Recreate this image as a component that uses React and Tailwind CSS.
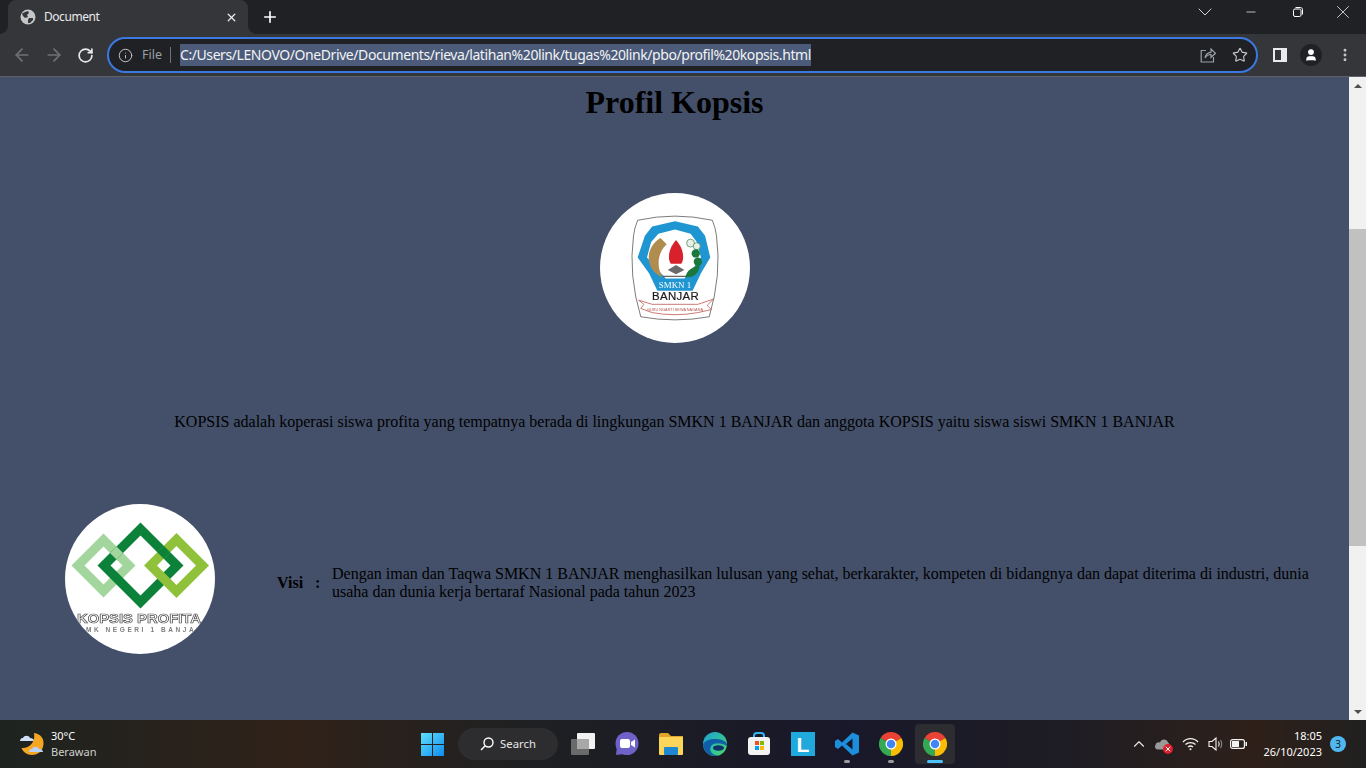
import React from "react";
import { ArrowLeft, ArrowRight, RotateCw, Info, Star, X, Plus, ChevronDown, ChevronUp, Minus, EllipsisVertical, User } from "lucide-react";

const UI = "font-['Noto_Sans',sans-serif]";

function Globe() {
  return (
    <svg width="16" height="16" viewBox="0 0 16 16">
      <circle cx="8" cy="8" r="7.5" fill="#c4c7c5" />
      <path d="M2 4.5 L5 3 L8 2 L9 4 L7 6 L8 8 L5 9 L3 7 Z" fill="#35363a" />
      <path d="M9 9 L13 9 L13 11 L10 14 L8 14 L8 11 Z" fill="#35363a" />
    </svg>
  );
}

function Share() {
  return (
    <svg width="16" height="16" viewBox="0 0 16 16" fill="none" stroke="#9aa0a6" strokeWidth="1.2">
      <path d="M6 3.5H1.2V15H13.5V10" />
      <path d="M5 11C5.5 7.5 8 5.5 11 5.3V2L15.5 6.3 11 10.3V7.5C8.5 7.5 6.5 8.8 5 11Z" />
    </svg>
  );
}

function SidePanel() {
  return (
    <svg width="14" height="14" viewBox="0 0 14 14">
      <path fillRule="evenodd" d="M0 0H14V14H0ZM2 2V12H8V2Z" fill="#e8eaed" />
    </svg>
  );
}

function Restore() {
  return (
    <svg width="10" height="10" viewBox="0 0 10 10" fill="none" stroke="#fff" strokeWidth="1">
      <rect x="0.5" y="2" width="7.5" height="7.5" rx="1.5" />
      <path d="M2.5 0.5H7.5C8.6 0.5 9.5 1.4 9.5 2.5V7.5" />
    </svg>
  );
}

function SmkLogo() {
  return (
    <svg width="94" height="110" viewBox="0 0 90 106" className="blur-[0.35px]">
      <path d="M9 7 Q45 -1 81 7 Q84 14 85 22 Q90 60 78 100 Q45 106 12 100 Q0 60 5 22 Q6 14 9 7Z" fill="#fff" stroke="#4a4a4a" strokeWidth="0.7" />
      <path d="M45 8 L67 13 L74 22 L79 43 L70 58 L62 75 L28 75 L20 58 L9 43 L16 22 L23 13 Z" fill="#1f95d2" />
      <path d="M45 16 L60 20 L66 28 L70 43 L62 54 L54 63 L36 63 L28 54 L18 43 L22 28 L29 20 Z" fill="#fff" />
      <path d="M31 24 C16 33 15 54 33 62 C27 52 28 38 37 30Z" fill="#b08d4f" />
      <path d="M46 26 C38 35 38 45 41 49 L51 49 C54 45 54 35 46 26Z" fill="#d8212a" />
      <path d="M38 55 L46 50 L54 55 L46 59Z" fill="#6a6a6a" />
      <path d="M33 61 H59" stroke="#444" strokeWidth="1" />
      <circle cx="60" cy="29" r="3.8" fill="#e9efe6" stroke="#3b8a55" strokeWidth="0.7" />
      <circle cx="66" cy="32" r="3.4" fill="#e9efe6" stroke="#3b8a55" strokeWidth="0.7" />
      <circle cx="65" cy="39" r="4" fill="#19783a" />
      <circle cx="67" cy="47" r="4" fill="#19783a" />
      <path d="M55 62 C56 55 62 52 69 50 C68 58 64 62 55 62Z" fill="#19783a" />
      <text x="45" y="72.5" textAnchor="middle" fontSize="8.6" fill="#fff" fontFamily="Liberation Serif">SMKN 1</text>
      <text x="45.5" y="84" textAnchor="middle" fontSize="11" fontWeight="500" stroke="#1b1b1b" strokeWidth="0.2" fill="#1b1b1b" fontFamily="Liberation Sans" letterSpacing="0.3">BANJAR</text>
      <path d="M10 84 L23 88 L67 88 L82 83 L76 89 L80 93 L67 96 Q45 100 23 96 L12 92 L15 88Z" fill="#fff" stroke="#c0605a" strokeWidth="0.8" />
      <text x="45" y="94" textAnchor="middle" fontSize="3.7" fill="#b5564f" fontFamily="Liberation Sans">GURU NGARTI SEWA NAGARA</text>
    </svg>
  );
}

function KopsisLogo() {
  return (
    <svg width="150" height="150" viewBox="0 0 150 150" className="blur-[0.25px]">
      <path fillRule="evenodd" d="M38.5 29.5 L70.5 61.5 L38.5 93.5 L6.5 61.5Z M38.5 42.5 L19.5 61.5 L38.5 80.5 L57.5 61.5Z" fill="#a3d69c" />
      <path fillRule="evenodd" d="M75.5 18.5 L118.5 61.5 L75.5 104.5 L32.5 61.5Z M75.5 31.5 L45.5 61.5 L75.5 91.5 L105.5 61.5Z" fill="#0b8139" />
      <path fillRule="evenodd" d="M111.5 29 L144 61.5 L111.5 94 L79 61.5Z M111.5 42 L92 61.5 L111.5 81 L131 61.5Z" fill="#8fc23a" />
      <path d="M92.25 48.25 L98.75 41.75 L105.25 48.25 L98.75 54.75Z" fill="#0b8139" />
      <path d="M45 49 L51.5 42.5 L58 49 L51.5 55.5Z" fill="#a3d69c" />
      <text x="12" y="119" textLength="124" lengthAdjust="spacingAndGlyphs" fontSize="13" fontWeight="700" fill="#fff" stroke="#4f4f4f" strokeWidth="0.7" fontFamily="Liberation Sans">KOPSIS PROFITA</text>
      <text x="14" y="127.5" textLength="122" lengthAdjust="spacing" fontSize="6.5" fontWeight="700" fill="#7d7d7d" fontFamily="Liberation Sans">SMK NEGERI 1 BANJAR</text>
    </svg>
  );
}

function Chrome({ size = 24 }) {
  return (
    <svg width={size} height={size} viewBox="0 0 48 48">
      <path d="M24 24 L44.8 12 A24 24 0 0 0 3.2 12Z" fill="#ea4335" />
      <path d="M24 24 L3.2 12 A24 24 0 0 0 24 48Z" fill="#34a853" />
      <path d="M24 24 L24 48 A24 24 0 0 0 44.8 12Z" fill="#fbbc04" />
      <circle cx="24" cy="24" r="11" fill="#fff" />
      <circle cx="24" cy="24" r="8.5" fill="#4285f4" />
    </svg>
  );
}

function Slot({ children, dot }) {
  return (
    <div className="relative flex h-[24px] w-[24px] items-center justify-center">
      {children}
      {dot && <span className="absolute left-[9px] top-[28px] h-[3px] w-[6px] rounded-full bg-[#9a9a9f]" />}
    </div>
  );
}

function Taskbar() {
  return (
    <footer className={`flex h-[48px] shrink-0 items-center bg-[linear-gradient(90deg,#1e2320_0%,#302219_22%,#1f2022_38%,#18182a_62%,#1e1d24_78%,#2e2019_92%,#20201f_100%)] ${UI}`}>
      <div className="ml-[19px] flex w-[402px] items-center gap-[6px]">
        <svg width="26" height="26" viewBox="0 0 26 26">
          <path d="M15 2 C22 3 25 8 24.5 13 C24 20 19 24 13 24 C8 24 4 21 2.5 17 C9 18 17 12 15 2Z" fill="#f5a623" />
          <path d="M1 10 C1 7.5 3 7 4 7 C5 4 10 4 11 7 C13 7 15 8 15 10 Z" fill="#cfe0f7" />
          <path d="M10 21 C10 18.5 12 18 13 18 C14 15 19 15 20 18 C22 18 24 19 24 21 Z" fill="#b9d2f5" />
        </svg>
        <div className="flex flex-col text-[11px] leading-[16px]">
          <span className="text-white">30°C</span>
          <span className="text-[#cfcfcf]">Berawan</span>
        </div>
      </div>

      <svg width="23" height="23" viewBox="0 0 23 23">
        <defs>
          <linearGradient id="win" x1="0" y1="0" x2="1" y2="1">
            <stop offset="0" stopColor="#5fe0fb" />
            <stop offset="1" stopColor="#0f8cf0" />
          </linearGradient>
        </defs>
        <path d="M0 0H11V11H0ZM12 0H23V11H12ZM0 12H11V23H0ZM12 12H23V23H12Z" fill="url(#win)" />
      </svg>

      <div className="ml-[14px] flex h-[32px] w-[100px] items-center justify-center gap-[6px] rounded-full bg-[#2d2d2f] text-[11.3px] text-[#e6e6e6]">
        <svg width="14" height="14" viewBox="0 0 14 14" fill="none" stroke="#fff" strokeWidth="1.4">
          <circle cx="8.5" cy="5.5" r="4.5" />
          <path d="M5.2 8.8 L1 13" />
        </svg>
        Search
      </div>

      <div className="ml-[13px] flex items-center gap-[20px]">
        <Slot>
          <svg width="24" height="22" viewBox="0 0 24 22">
            <rect x="0" y="6" width="18" height="16" rx="1" fill="#6a6a6a" />
            <rect x="6" y="0" width="18" height="16" rx="1" fill="#f2f2f2" />
            <rect x="6" y="6" width="12" height="10" fill="#a8a8a8" />
          </svg>
        </Slot>
        <Slot>
          <svg width="24" height="24" viewBox="0 0 24 24">
            <circle cx="12" cy="11.5" r="11.5" fill="#6e62c8" />
            <path d="M1 23 L2 14 L9 22Z" fill="#6e62c8" />
            <rect x="5" y="7" width="10" height="9" rx="2" fill="#fff" />
            <path d="M16 10 L20 7.5 V15.5 L16 13Z" fill="#fff" />
          </svg>
        </Slot>
        <Slot>
          <svg width="24" height="22" viewBox="0 0 24 22">
            <path d="M0 2 Q0 0 2 0 H9 L12 3 H24 V8 H0Z" fill="#e0a526" />
            <rect x="0" y="4" width="24" height="18" rx="1" fill="#fcd65b" />
            <rect x="5" y="14" width="14" height="8" rx="1" fill="#1f86d0" />
          </svg>
        </Slot>
        <Slot>
          <svg width="24" height="24" viewBox="0 0 24 24">
            <defs>
              <linearGradient id="edge" x1="0" y1="0" x2="1" y2="1">
                <stop offset="0" stopColor="#1f9fd8" />
                <stop offset="0.5" stopColor="#2fbfa0" />
                <stop offset="1" stopColor="#4fd66a" />
              </linearGradient>
            </defs>
            <circle cx="12" cy="12" r="12" fill="url(#edge)" />
            <path d="M0 12 A12 12 0 0 0 16 23.3 C9 24 5 18 8.5 13.5 C11 10.5 18.5 10.5 23.8 14 C24 13 24 12.5 24 12 C22 8 17 7 12 7 C6 7 2 9 0 12Z" fill="#0f5fa8" />
            <ellipse cx="15.5" cy="16" rx="5.5" ry="2.7" fill="#12336a" />
          </svg>
        </Slot>
        <Slot>
          <svg width="24" height="24" viewBox="0 0 24 24">
            <path d="M7 7 V4 Q7 1 10 1 H14 Q17 1 17 4 V7" fill="none" stroke="#31b6f0" strokeWidth="2" />
            <rect x="1" y="5" width="22" height="18" rx="3" fill="#f3f3f3" />
            <rect x="8" y="9" width="4" height="4" fill="#f25022" />
            <rect x="13" y="9" width="4" height="4" fill="#7fba00" />
            <rect x="8" y="14" width="4" height="4" fill="#00a4ef" />
            <rect x="13" y="14" width="4" height="4" fill="#ffb900" />
          </svg>
        </Slot>
        <Slot>
          <div className="flex h-[24px] w-[24px] items-center justify-center bg-[#1fa9dc] font-['Liberation_Sans',sans-serif] text-[21px] font-bold leading-none text-white">L</div>
        </Slot>
        <Slot dot>
          <svg width="24" height="24" viewBox="0 0 24 24">
            <path d="M17.5 0.5 L24 3.5 V20.5 L17.5 23.5 L7 13.5 L3 17 L0 15 V9 L3 7 L7 10.5Z M17.5 6.5 L11 12 L17.5 17.5Z" fill="#1b8fdc" fillRule="evenodd" />
          </svg>
        </Slot>
        <Slot dot>
          <Chrome />
        </Slot>
      </div>

      <div className="relative ml-[12px] flex h-[40px] w-[40px] items-center justify-center rounded-[4px] bg-[#2c2c31]">
        <Chrome />
        <span className="absolute bottom-[1px] left-[12px] h-[3px] w-[16px] rounded-full bg-[#4cc2ff]" />
      </div>

      <div className="ml-auto flex items-center text-white">
        <ChevronUp size={18} strokeWidth={1.5} color="#e8e8e8" className="mr-[6px]" />
        <div className="relative mr-[11px] h-[14px] w-[17px]">
          <svg width="17" height="14" viewBox="0 0 17 14">
            <path d="M4 12.5 C1 12.5 0.5 9.5 1.5 8 C2 5 5 5 6 5.5 C7 1.5 13 1.5 14 5.5 C16 6.5 16.5 12.5 13 12.5Z" fill="#9a9a9a" />
          </svg>
          <span className="absolute bottom-[-3px] right-[-2px] flex h-[10px] w-[10px] items-center justify-center rounded-full bg-[#d9202c]">
            <X size={8} strokeWidth={3} color="#fff" />
          </span>
        </div>
        <svg width="17" height="14" viewBox="0 0 17 14" fill="none" stroke="#f2f2f2" strokeWidth="1.3" className="mr-[9px]">
          <path d="M1 5 C5 0.5 12 0.5 16 5" />
          <path d="M3.5 7.5 C6 5 11 5 13.5 7.5" />
          <path d="M6 10 C7.3 9 9.7 9 11 10" />
          <circle cx="8.5" cy="12.3" r="1" fill="#f2f2f2" stroke="none" />
        </svg>
        <svg width="16" height="14" viewBox="0 0 16 14" fill="none" stroke="#f2f2f2" strokeWidth="1.1" className="mr-[6px]">
          <path d="M1 4.5 H4 L8 1 V13 L4 9.5 H1Z" />
          <path d="M10.5 4.5 Q12 7 10.5 9.5" />
          <path d="M12.5 3 Q15 7 12.5 11" stroke="#8a8a8a" />
        </svg>
        <svg width="17" height="10" viewBox="0 0 17 10" className="mr-[16px]">
          <rect x="0.6" y="0.6" width="13.8" height="8.8" rx="2" fill="none" stroke="#f2f2f2" strokeWidth="1.2" />
          <rect x="2" y="2" width="7" height="6" fill="#f2f2f2" />
          <rect x="15.5" y="3" width="1.5" height="4" fill="#f2f2f2" />
        </svg>
        <div className="mr-[8px] flex flex-col items-end text-[11px] leading-[16px] text-white">
          <span>18:05</span>
          <span>26/10/2023</span>
        </div>
        <div className="mr-[20px] flex h-[16px] w-[16px] items-center justify-center rounded-full bg-[#4fb8f0] text-[10px] text-[#14212b]">3</div>
      </div>
    </footer>
  );
}

export default function App() {
  return (
    <div className="flex h-[768px] w-[1366px] flex-col overflow-hidden bg-[#44506a]">
      <div className={`flex h-[34px] shrink-0 items-end bg-[#202124] ${UI}`}>
        <div className="relative ml-[8px] flex h-[34px] w-[240px] items-center rounded-t-[8px] bg-[#35363a] pl-[12px] pr-[10px]">
          <span className="absolute bottom-0 left-[-8px] h-[8px] w-[8px] bg-[radial-gradient(circle_at_0_0,#202124_7.5px,#35363a_8px)]" />
          <span className="absolute bottom-0 right-[-8px] h-[8px] w-[8px] bg-[radial-gradient(circle_at_100%_0,#202124_7.5px,#35363a_8px)]" />
          <Globe />
          <span className="ml-[8px] flex-1 text-[12px] tracking-[-0.45px] text-[#e8eaed]">Document</span>
          <X size={13} strokeWidth={2.4} color="#e8eaed" />
        </div>
        <Plus size={18} strokeWidth={2.2} color="#ffffff" className="mb-[8px] ml-[13px]" />
        <div className="ml-auto mb-[10px] flex items-center text-white">
          <ChevronDown size={24} strokeWidth={0.9} color="#e8eaed" className="mr-[27px]" />
          <Minus size={14} strokeWidth={1.2} className="mr-[35px]" />
          <Restore />
          <X size={22} strokeWidth={0.8} className="ml-[29px] mr-[12px]" />
        </div>
      </div>

      <div className={`flex h-[42px] shrink-0 items-center bg-[#35363a] ${UI}`}>
        <ArrowLeft size={20} strokeWidth={2} color="#6f7276" className="ml-[12px]" />
        <ArrowRight size={20} strokeWidth={2} color="#6f7276" className="ml-[12px]" />
        <RotateCw size={17} strokeWidth={2.4} color="#e8eaed" className="ml-[13px]" />
        <div className="ml-[13px] flex h-[36px] w-[1151px] items-center rounded-full border-2 border-[#3b78e0] bg-[#202124] pl-[9px] pr-[8px]">
          <Info size={15} strokeWidth={1.6} color="#bdc1c6" />
          <span className="ml-[9px] text-[12.5px] text-[#9aa0a6]">File</span>
          <span className="ml-[8px] h-[16px] w-px bg-[#6f7276]" />
          <span className="ml-[9px] whitespace-nowrap bg-[#4c5b79] text-[14px] leading-[22px] tracking-[-0.42px] text-[#f1f3f4]">C:/Users/LENOVO/OneDrive/Documents/rieva/latihan%20link/tugas%20link/pbo/profil%20kopsis.html</span>
          <span className="ml-auto"><Share /></span>
          <Star size={16} strokeWidth={1.7} color="#c4c7c5" className="ml-[16px]" />
        </div>
        <span className="ml-[15px]"><SidePanel /></span>
        <div className="ml-[13px] flex h-[22px] w-[22px] items-center justify-center rounded-full bg-[#202124]">
          <User size={14} fill="#fff" color="#fff" />
        </div>
        <EllipsisVertical size={16} strokeWidth={2.4} color="#c4c7c5" className="ml-[15px]" />
      </div>
      <div className="h-px shrink-0 bg-[#5f6368]" />

      <div className="flex min-h-0 flex-1">
        <main className="flex-1 overflow-hidden bg-[#44506a] pt-[7px] font-['Liberation_Serif',serif] text-black">
          <h1 className="text-center text-[32px] font-bold leading-[37px]">Profil Kopsis</h1>
          <div className="mt-[72px] flex justify-center">
            <div className="flex h-[150px] w-[150px] items-center justify-center rounded-full bg-white">
              <SmkLogo />
            </div>
          </div>
          <p className="mt-[70px] text-center text-[16px] leading-[18px]">KOPSIS adalah koperasi siswa profita yang tempatnya berada di lingkungan SMKN 1 BANJAR dan anggota KOPSIS yaitu siswa siswi SMKN 1 BANJAR</p>
          <div className="ml-[65px] mt-[73px] flex items-center">
            <div className="h-[150px] w-[150px] shrink-0 overflow-hidden rounded-full bg-white">
              <KopsisLogo />
            </div>
            <b className="ml-[62px] mt-[7px] w-[38px] text-[16px] leading-[18px]">Visi</b>
            <b className="mt-[7px] w-[17px] text-[16px] leading-[18px]">:</b>
            <p className="mt-[7px] w-[990px] text-[16px] leading-[18px]">Dengan iman dan Taqwa SMKN 1 BANJAR menghasilkan lulusan yang sehat, berkarakter, kompeten di bidangnya dan dapat diterima di industri, dunia usaha dan dunia kerja bertaraf Nasional pada tahun 2023</p>
          </div>
        </main>
        <div className="flex w-[17px] shrink-0 flex-col bg-[#f1f1f1]">
          <div className="flex h-[17px] items-center justify-center">
            <div className="h-0 w-0 border-x-[4px] border-b-[4px] border-x-transparent border-b-[#505050]" />
          </div>
          <div className="mt-[135px] h-[317px] bg-[#c1c1c1]" />
          <div className="mt-auto flex h-[17px] items-center justify-center">
            <div className="h-0 w-0 border-x-[4px] border-t-[4px] border-x-transparent border-t-[#505050]" />
          </div>
        </div>
      </div>

      <Taskbar />
    </div>
  );
}
